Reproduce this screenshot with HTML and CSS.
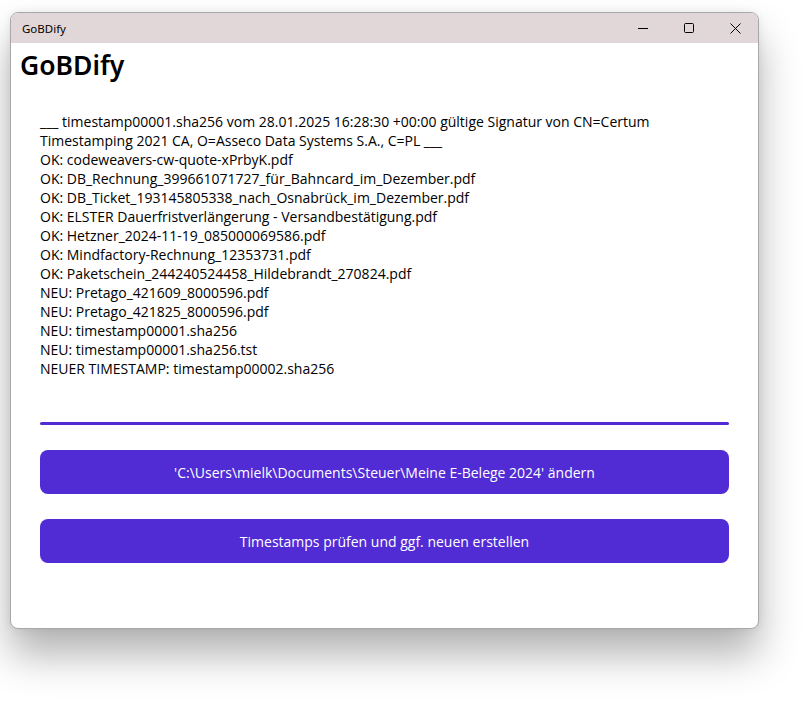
FILE: index.html
```html
<!DOCTYPE html>
<html lang="de">
<head>
    <meta charset="UTF-8">
    <title>GoBDify</title>
    <link rel="stylesheet" href="styles.css">
</head>
<body>
    <div class="window">
        <div class="titlebar">
            <span class="title">GoBDify</span>
            <div class="controls">
                <div class="ctrl">
                    <svg width="10" height="10" viewBox="0 0 10 10"><path d="M0 5.5h10" stroke="#000" stroke-width="1"/></svg>
                </div>
                <div class="ctrl">
                    <svg width="10" height="10" viewBox="0 0 10 10"><rect x="0.5" y="0.5" width="9" height="9" rx="1" fill="none" stroke="#000" stroke-width="1"/></svg>
                </div>
                <div class="ctrl">
                    <svg width="11" height="11" viewBox="0 0 11 11"><path d="M0.5 0.5l10 10M10.5 0.5l-10 10" stroke="#000" stroke-width="1"/></svg>
                </div>
            </div>
        </div>
        <div class="page">
            <h1>GoBDify</h1>
            <div class="log">
                <div>___ timestamp00001.sha256 vom 28.01.2025 16:28:30 +00:00 gültige Signatur von CN=Certum Timestamping 2021 CA, O=Asseco Data Systems S.A., C=PL ___</div>
                <div>OK: codeweavers-cw-quote-xPrbyK.pdf</div>
                <div>OK: DB_Rechnung_399661071727_für_Bahncard_im_Dezember.pdf</div>
                <div>OK: DB_Ticket_193145805338_nach_Osnabrück_im_Dezember.pdf</div>
                <div>OK: ELSTER Dauerfristverlängerung - Versandbestätigung.pdf</div>
                <div>OK: Hetzner_2024-11-19_085000069586.pdf</div>
                <div>OK: Mindfactory-Rechnung_12353731.pdf</div>
                <div>OK: Paketschein_244240524458_Hildebrandt_270824.pdf</div>
                <div>NEU: Pretago_421609_8000596.pdf</div>
                <div>NEU: Pretago_421825_8000596.pdf</div>
                <div>NEU: timestamp00001.sha256</div>
                <div>NEU: timestamp00001.sha256.tst</div>
                <div>NEUER TIMESTAMP: timestamp00002.sha256</div>
            </div>
            <div class="progress"></div>
            <button class="btn">'C:\Users\mielk\Documents\Steuer\Meine E-Belege 2024' ändern</button>
            <button class="btn">Timestamps prüfen und ggf. neuen erstellen</button>
        </div>
    </div>
</body>
</html>
```

FILE: styles.css
```css
html, body {
    min-height: 705px;
}
body {
    margin: 0;
    padding: 12px 0 40px 10px;
    box-sizing: border-box;
    background-color: #fff;
    font-family: "Open Sans", "Noto Sans", sans-serif;
    color: #000;
}
.window {
    width: 747px;
    height: 615px;
    border: 1px solid #a8a8a8;
    border-radius: 8px;
    overflow: hidden;
    background-color: #fff;
    box-shadow: 0 26px 40px rgba(0, 0, 0, 0.3), 0 0 10px rgba(0, 0, 0, 0.08);
    display: flex;
    flex-direction: column;
}
.titlebar {
    height: 30px;
    background-color: #e2d7d8;
    display: flex;
    align-items: center;
    justify-content: space-between;
}
.title {
    padding-left: 11px;
    font-family: "Noto Sans", sans-serif;
    font-size: 11.5px;
}
.controls {
    display: flex;
    height: 100%;
}
.ctrl {
    width: 46px;
    height: 100%;
    display: flex;
    align-items: center;
    justify-content: center;
}
.page {
    padding: 0 29px 0 29px;
}
.page h1 {
    margin: 4px 0 0 -20px;
    font-family: "Noto Sans", sans-serif;
    font-size: 26.5px;
    font-weight: 600;
    line-height: 36px;
}
.log {
    margin-top: 29px;
    font-size: 14px;
    line-height: 19px;
    padding-right: 60px;
}
.progress {
    height: 3px;
    margin-top: 44px;
    border-radius: 2px;
    background-color: #512bd4;
}
.btn {
    display: block;
    width: 100%;
    height: 44px;
    margin-top: 25px;
    border: none;
    border-radius: 8px;
    background-color: #512bd4;
    color: #fff;
    font-family: "Open Sans", "Noto Sans", sans-serif;
    font-size: 14px;
}
.btn + .btn {
    margin-top: 25px;
}
```
